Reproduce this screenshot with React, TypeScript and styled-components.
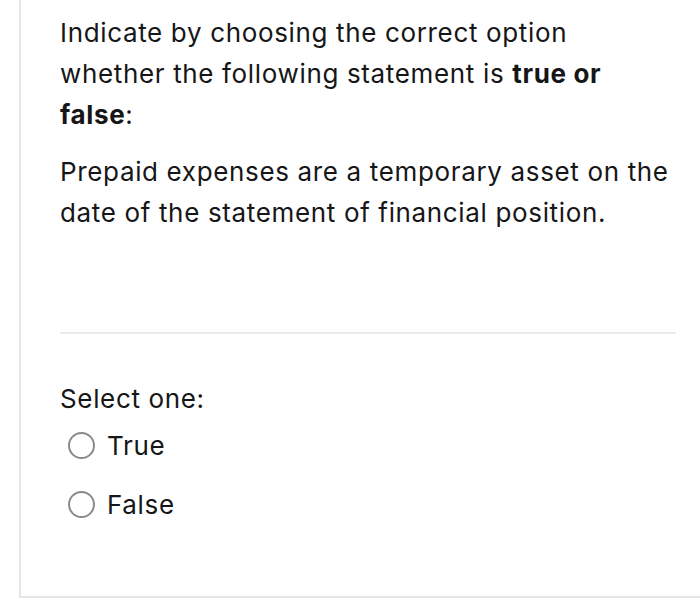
import React from 'react';
import styled, { createGlobalStyle } from 'styled-components';

const GlobalStyle = createGlobalStyle`
  html, body {
    margin: 0;
    padding: 0;
    background: #ffffff;
    overflow: hidden;
  }
  body {
    font-family: Inter, "Liberation Sans", Arial, sans-serif;
    color: #161618;
  }
`;

const options = ['True', 'False'];

export default function App() {
  return (
    <>
      <GlobalStyle />
      <Page>
        <Card>
          <Question>
            <Paragraph>
              Indicate by choosing the correct option
              <br />
              whether the following statement is <strong>true or</strong>
              <br />
              <strong>false</strong>:
            </Paragraph>
            <Paragraph>
              Prepaid expenses are a temporary asset on the
              <br />
              date of the statement of financial position.
            </Paragraph>
          </Question>
          <Divider />
          <Answer>
            <Prompt>Select one:</Prompt>
            <OptionList>
              {options.map((label) => (
                <Option key={label}>
                  <Radio />
                  <OptionLabel>{label}</OptionLabel>
                </Option>
              ))}
            </OptionList>
          </Answer>
        </Card>
      </Page>
    </>
  );
}

const Page = styled.div`
  width: 700px;
  height: 610px;
  overflow: hidden;
`;

const Card = styled.div`
  box-sizing: border-box;
  width: 740px;
  height: 600px;
  margin-top: -2px;
  margin-left: 19px;
  padding: 12px 81px 0 39px;
  border: 2px solid #e6e6e6;
  display: flex;
  flex-direction: column;
`;

const Question = styled.div`
  display: flex;
  flex-direction: column;
  gap: 16px;
`;

const Paragraph = styled.p`
  margin: 0;
  font-size: 26px;
  line-height: 41px;
  letter-spacing: 0.65px;
  white-space: nowrap;

  strong {
    font-weight: 700;
  }
`;

const Divider = styled.div`
  height: 2px;
  background: #ececec;
  margin-top: 99px;
`;

const Answer = styled.div`
  display: flex;
  flex-direction: column;
  padding-top: 44px;
`;

const Prompt = styled.div`
  font-size: 26px;
  line-height: 41px;
  letter-spacing: 0.65px;
`;

const OptionList = styled.div`
  display: flex;
  flex-direction: column;
  gap: 18px;
  margin-top: 6px;
  padding-left: 8px;
`;

const Option = styled.label`
  display: flex;
  align-items: center;
  gap: 12px;
  height: 41px;
`;

const Radio = styled.span`
  box-sizing: border-box;
  width: 27px;
  height: 27px;
  border-radius: 50%;
  border: 2.5px solid #8a8a8e;
  background: #ffffff;
`;

const OptionLabel = styled.span`
  font-size: 26px;
  line-height: 41px;
  letter-spacing: 0.65px;
`;
